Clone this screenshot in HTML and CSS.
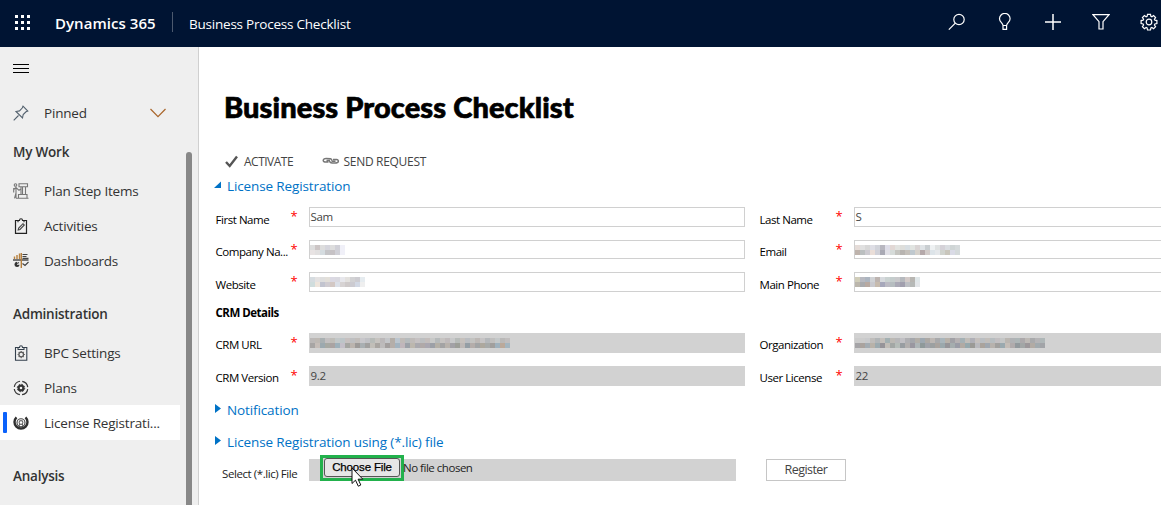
FILE: index.html
```html
<!DOCTYPE html>
<html lang="en">
<head>
<meta charset="utf-8">
<title>Business Process Checklist</title>
<link rel="stylesheet" href="styles.css">
</head>
<body>
<div class="app">
  <header class="topbar">
    <svg class="waffle" width="16" height="16" viewBox="0 0 16 16" fill="#fff"><path d="M0 0h3v3H0zM0 6h3v3H0zM0 12h3v3H0zM6 0h3v3H6zM6 6h3v3H6zM6 12h3v3H6zM12 0h3v3h-3zM12 6h3v3h-3zM12 12h3v3h-3z"/></svg>
    <span class="brand">Dynamics 365</span>
    <span class="divider"></span>
    <span class="appname">Business Process Checklist</span>
    <div class="actions">
      <svg width="18" height="18" viewBox="0 0 18 18"><circle cx="11" cy="6.500" r="5.200"/><path d="M7.300 10.200L.8 16.700"/></svg>
      <svg width="18" height="18" viewBox="0 0 18 18"><path d="M7 12.500c0-2.500-3.500-3.500-3.500-6.800a5.300 5.300 0 0 1 10.600 0c0 3.300-3.500 4.300-3.500 6.800zM7 12.500v3.800h3.600v-3.800"/></svg>
      <svg width="18" height="18" viewBox="0 0 18 18"><path d="M9 1v16M1 9h16" stroke-width="1.500"/></svg>
      <svg width="18" height="18" viewBox="0 0 18 18"><path d="M1 1.700h16L11 8.700v7.300H7V8.700z"/></svg>
      <svg width="18" height="18" viewBox="0 0 18 18"><path d="M7.500 1.300h3l.4 2 1 .4 1.700-1.200 2 2-1.200 1.700.5 1 2 .4v3l-2 .4-.5 1 1.200 1.700-2 2-1.700-1.200-1 .5-.4 2h-3l-.4-2-1-.5-1.700 1.200-2-2 1.200-1.700-.5-1-2-.4v-3l2-.4.5-1-1.200-1.700 2-2 1.700 1.200 1-.4z"/><circle cx="9" cy="9" r="2.800"/></svg>
    </div>
  </header>
  <div class="body">
    <nav class="sidebar">
      <svg class="burger" width="16" height="10" viewBox="0 0 16 10"><path d="M0 .5h16M0 4.500h16M0 8.500h16" stroke="#000"/></svg>
      <div class="item pinned">
        <svg class="ico" width="16" height="16" viewBox="0 0 16 16"><path d="M10 1.200l4.800 4.800-1.800.8-2.800 2.700-.7 3.500-6.500-6.500 3.500-.6L9.200 3zM5.500 10.500L.7 15.300" stroke="#53616e"/></svg>
        <span>Pinned</span>
        <svg class="chev" width="16" height="10" viewBox="0 0 16 10"><path d="M.5 1l7.500 7.700L15.500 1" stroke="#a9662b"/></svg>
      </div>
      <h2 class="group work">My Work</h2>
      <div class="item">
        <svg class="ico" width="16" height="16" viewBox="0 0 16 16"><g stroke="#777"><path d="M6 .7h8.500v3H6zM8 3.700v7.600M12.500 3.700v7.600M5.500 11.500h8.500v3.800H5.500zM3 4.300v11M.7 5v4.500M.7 6.500L3 4.500l3 2.800 1.500-1M3 10L1.500 15.300M3 15.300h12.500M9.500 4v7"/><circle cx="2.500" cy="2" r="1.300"/></g></svg>
        <span>Plan Step Items</span>
      </div>
      <div class="item">
        <svg class="ico" width="16" height="16" viewBox="0 0 16 16"><path d="M5 2.500H2.500v12.800h11V2.500H11" stroke="#222" stroke-width="1.200"/><path d="M5 4.300V2.500h1.500C6.500.2 9.500.2 9.500 2.500H11v1.800" stroke="#222"/><path d="M5.200 12l.5-2 4.300-4.300 1.300 1.300L7 11.400z" stroke="#444"/></svg>
        <span>Activities</span>
      </div>
      <div class="item">
        <svg class="ico" width="16" height="16" viewBox="0 0 16 16"><path d="M0 7h15.500" stroke="#333" stroke-width="1.300"/><path d="M1.500 6V3.500M4 6V2M6.500 6V.5M8.300 0v15" stroke="#b7803d" stroke-width="1.400"/><path d="M9.500 1.500h5M9.500 3.500h4M9.500 5.300h6M9.500 10.500l2.500 2 3.500-3.500M6 9.500l-2 1" stroke="#444" stroke-width="1.200"/><path d="M4 8.700a2.600 2.600 0 1 0 2.600 3H4z" fill="#333" stroke="none"/></svg>
        <span>Dashboards</span>
      </div>
      <h2 class="group admin">Administration</h2>
      <div class="item">
        <svg class="ico" width="16" height="16" viewBox="0 0 16 16"><path d="M5 2.500H2.500v12.800h11.300V2.500H11M4.500 4.500h7M5 4.300V2.500h1.500C6.500.2 9.500.2 9.500 2.500H11v1.800" stroke="#34404d"/><circle cx="8.200" cy="9.500" r="2.300" stroke="#555" stroke-width="1.200"/><path d="M8.200 5.900v1.200M8.200 12v1.200M4.600 9.500h1.200M10.700 9.500h1.200M5.700 7l.8.8M10.700 7l-.8.8M5.700 12l.8-.8M10.700 12l-.8-.8" stroke="#666"/></svg>
        <span>BPC Settings</span>
      </div>
      <div class="item">
        <svg class="ico" width="16" height="16" viewBox="0 0 16 16"><circle cx="8" cy="8" r="6.800" stroke="#333" stroke-width="1.200" stroke-dasharray="8.400 2.280" stroke-dashoffset="-1.100"/><circle cx="8" cy="8" r="2.400" stroke="#333" stroke-width="2.200"/><circle cx="8" cy="8" r="3.700" stroke="#333" stroke-width="1" stroke-dasharray="1.500 1.400"/></svg>
        <span>Plans</span>
      </div>
      <div class="item current">
        <svg class="ico" width="16" height="16" viewBox="0 0 16 16"><path d="M3.500 2.300a6.500 6.500 0 1 0 9 0" stroke="#303030" stroke-width="2.400"/><circle cx="8" cy="7.800" r="4" stroke="#444" stroke-width="1.100"/><circle cx="8" cy="7.500" r="1.900" stroke="#666"/><path d="M5.500 11.500l1.500-2.500M10.500 11.500L9 9" stroke="#555"/></svg>
        <span>License Registrati...</span>
      </div>
      <h2 class="group analysis">Analysis</h2>
      <div class="scrollthumb"></div>
    </nav>
    <main class="main">
      <h1 class="title">Business Process Checklist</h1>
      <div class="toolbar">
        <svg width="14" height="13" viewBox="0 0 14 13"><path d="M1 7l3.700 4L12 1.500" fill="none" stroke="#555" stroke-width="2.400"/></svg>
        <span class="t-activate">ACTIVATE</span>
        <svg class="link" width="18" height="8" viewBox="0 0 18 8"><path d="M10 3.500C9.500 1.500 8.500 1.500 4 1.500 1 1.500 0 4.500 3 5h3.500M7.500 4C8 6 9 6 13 6c4 0 4.500-3 1.500-3.500H11M4.500 3.500h3.500M9.500 4.200h4" fill="none" stroke="#777" stroke-width="1.400"/></svg>
        <span class="t-send">SEND REQUEST</span>
      </div>
      <div class="section open">
        <svg width="8" height="8" viewBox="0 0 8 8"><path d="M7 .5V7H0z" fill="#0072c6"/></svg>
        <span class="s-license">License Registration</span>
      </div>
      <div class="row r1">
        <label>First Name</label><i>*</i><div class="field">Sam</div>
        <label>Last Name</label><i>*</i><div class="field">S</div>
      </div>
      <div class="row r2">
        <label>Company Na...</label><i>*</i><div class="field"><span class="mosaic" data-m="company"></span></div>
        <label>Email</label><i>*</i><div class="field"><span class="mosaic" data-m="email"></span></div>
      </div>
      <div class="row r3">
        <label>Website</label><i>*</i><div class="field"><span class="mosaic" data-m="website"></span></div>
        <label>Main Phone</label><i>*</i><div class="field"><span class="mosaic" data-m="phone"></span></div>
      </div>
      <h3 class="crm">CRM Details</h3>
      <div class="row r4">
        <label>CRM URL</label><i>*</i><div class="field locked"><span class="mosaic" data-m="url"></span></div>
        <label>Organization</label><i>*</i><div class="field locked"><span class="mosaic" data-m="org"></span></div>
      </div>
      <div class="row r5">
        <label>CRM Version</label><i>*</i><div class="field locked">9.2</div>
        <label>User License</label><i>*</i><div class="field locked">22</div>
      </div>
      <div class="section notif">
        <svg width="7" height="10" viewBox="0 0 7 10"><path d="M0 0l6 4.500L0 9z" fill="#0072c6"/></svg>
        <span>Notification</span>
      </div>
      <div class="section lic">
        <svg width="7" height="10" viewBox="0 0 7 10"><path d="M0 0l6 4.500L0 9z" fill="#0072c6"/></svg>
        <span>License Registration using (*.lic) file</span>
      </div>
      <div class="filerow">
        <span class="filelabel">Select (*.lic) File</span>
        <div class="filebar">
          <div class="highlight"><button class="choose">Choose File</button></div>
          <span class="nofile">No file chosen</span>
          <svg class="cursor" width="13" height="21" viewBox="0 0 13 21"><path d="M1 1v15.500l3.500-3.300 2.800 6 2.500-1.200-2.700-5.800h4.700z" fill="#fff" stroke="#111"/></svg>
        </div>
        <button class="register">Register</button>
      </div>
    </main>
  </div>
</div>
<script src="mosaic.js"></script>
</body>
</html>
```
FILE: styles.css
```css
* { box-sizing: border-box; }
body { margin: 0; font-family: "Open Sans", "Noto Sans", sans-serif; background: #fff; color: #333; }
h1, h2, h3 { margin: 0; }
svg { display: block; flex: none; }
button { font-family: inherit; padding: 0; }
.app { display: flex; flex-direction: column; width: 1161px; height: 505px; overflow: hidden; white-space: nowrap; }

.topbar { display: flex; align-items: center; height: 47px; flex: none; background: #001433; color: #fff; padding-left: 15px; }
.waffle { margin-top: -1px; }
.brand { width: 117px; margin-left: 24px; margin-top: -1px; font-size: 15px; font-weight: 600; letter-spacing: .05px; }
.divider { width: 1px; height: 20px; margin-top: -3px; background: #4c596e; }
.appname { margin-left: 16px; font-size: 13.500px; letter-spacing: -.22px; }
.actions { display: flex; gap: 30px; margin-left: auto; margin-right: 3px; margin-top: -3px; }
.actions svg { fill: none; stroke: #fff; stroke-width: 1.200; }

.body { display: flex; flex: 1; min-height: 0; }
.sidebar { position: relative; width: 199px; flex: none; background: #efefef; border-right: 1px solid #d0d0d0; overflow: hidden; }
.burger { margin: 17px 0 0 13px; }
.item { display: flex; align-items: center; width: 180px; height: 35px; padding-left: 13px; font-size: 13.500px; letter-spacing: -.2px; }
.item span { margin-left: 15px; }
.ico { fill: none; stroke-width: 1.100; }
.pinned { margin-top: 21px; }
.pinned span { width: 44px; }
.chev { fill: none; margin-left: 62px; stroke-width: 1.200; }
.group { height: 20px; line-height: 20px; padding-left: 13px; font-size: 13.500px; font-weight: 600; letter-spacing: -.22px; }
.work { margin: 12px 0 11px; }
.admin { margin: 26px 0 11px; }
.analysis { margin-top: 26px; }
.current { position: relative; background: #fff; }
.current::before { content: ""; position: absolute; left: 3px; top: 7px; width: 4px; height: 21px; border-radius: 1px; background: #0b62fb; }
.scrollthumb { position: absolute; left: 186px; top: 105px; width: 6px; height: 370px; border-radius: 3px; background: #888; }

.main { flex: 1; min-width: 0; padding-left: 17px; }
.title { height: 36px; margin: 42px 0 0 8px; line-height: 36px; font-family: Lato, sans-serif; font-weight: 900; font-size: 29px; color: #000; letter-spacing: .1px; -webkit-text-stroke: .7px #000; }
.toolbar { display: flex; align-items: center; height: 20px; margin: 26px 0 0 8.500px; font-size: 12px; color: #444; }
.t-activate { width: 78px; margin-left: 5.500px; letter-spacing: -.5px; }
.t-send { margin-left: 3.500px; letter-spacing: -.3px; }
.section { display: flex; align-items: center; height: 20px; font-size: 13.500px; color: #0072c6; letter-spacing: -.12px; }
.section svg { margin-top: -3px; }
.open { margin-top: 5px; margin-left: -2px; }
.open span { margin-left: 5px; }
.notif, .lic { margin-left: -1px; }
.notif span, .lic span { margin-left: 5px; }
.row { display: grid; grid-template-columns: 75px 18px 436px 15px 76px 18px 307px; height: 20px; color: #000; font-size: 11.500px; letter-spacing: -.45px; }
.row label { height: 20px; line-height: 20px; padding-top: 2px; margin-left: -.5px; }
.row label:nth-of-type(2) { grid-column: 5; }
.row i { font-style: normal; color: #f00; font-size: 13px; line-height: 20px; margin: -1px 0 0 -.5px; }
.field { height: 20px; border: 1px solid #d0d0d0; line-height: 18px; color: #444; letter-spacing: -.3px; padding-left: .5px; }
.row .field:last-child { border-right: 0; }
.locked { border-color: #d2d2d2; background: #d2d2d2; }
.r1 { margin-top: 11px; }
.r1 label { padding-top: 3px; }
.r2 { margin-top: 13px; }
.r2 .field { height: 19px; }
.r3 { margin-top: 12px; }
.r3 label { padding-top: 3px; }
.crm { height: 20px; line-height: 20px; margin: 11px 0 10px -.5px; font-size: 11.500px; color: #000; font-weight: 700; letter-spacing: -.5px; }
.r5 { margin-top: 13px; }
.notif { margin-top: 14px; }
.lic { margin-top: 12px; }
.mosaic { display: block; width: max-content; margin-top: 4px; margin-left: -.5px; }
.mosaic div { display: flex; }
.mosaic b { display: block; width: 5px; height: 5px; }
.filerow { display: flex; height: 22px; margin-top: 7px; }
.filelabel { width: 87px; padding: 5px 0 0 6px; margin-right: 6px; line-height: 20px; font-size: 11.500px; letter-spacing: -.42px; color: #222; }
.filebar { position: relative; display: flex; width: 427px; height: 22px; background: #d2d2d2; }
.highlight { width: 84px; height: 26px; margin: -4px 0 0 11px; border: 3px solid #22b14c; flex: none; background: #d2d2d2; }
.choose { display: block; width: 76px; height: 19px; margin: 0 0 0 1px; border: 1px solid #555; border-radius: 3px; background: #e6e6e6; color: #000; font: 11.500px/17px "Liberation Sans", Arial, sans-serif; letter-spacing: -.15px; -webkit-text-stroke: .25px #000; }
.nofile { line-height: 18px; font-size: 11.500px; margin-left: -1px; letter-spacing: -.48px; color: #222; }
.cursor { position: absolute; left: 42px; top: 8px; }
.register { width: 80px; height: 22px; margin-left: 30px; border: 1px solid #c6c6c6; background: #fff; font-size: 12.500px; line-height: 20px; color: #444; letter-spacing: -.55px; }
```
FILE: mosaic.js
```js
// Privacy mosaic: each string is a row of 5px cells, one space-separated hex colour per cell.
const masks = {
  company: ["ddd ccc5c5 ddd d5d5dc ddd d0d0d7 f0f0f8", "e8e3e3 e2e0e0 d5dce0 c5c5c8 c6c2c5 d0d0d7 f0f0f8"],
  email: ["e5dcd8 e0e0e0 d7d7d7 dedee5 d1d3da b8b7c0 dedde8 e2d8d5 e2e3e0 dededb d8dee2 e1e4e1 d9d4d4 dfe3e6 c9ced1 eef1f2 dfe2e2 d5d2d8 dadde1 cfd5d5 d5dadb",
    "beb3ac bbbfc0 cdcbd1 eaded8 d1d1d8 aaaab5 e1e0e7 d6dbd9 c5c5c0 b8b4b0 c5c0ba c0c9cf d6d2cc b5a9aa d2cbc9 dde4e9 e5e8eb d0d3ce c9c6bc dadbe6 d5dadb"],
  website: ["d6dce0 e4e2e2 dedede e2dfd9 dbd9e3 dad9e0 e7e7ec e3e1de d2d2d4 cdccd1 e6ecf0",
    "d0dddd eee5dc c2c4cf d0ccd1 d3c8c4 dce0e8 d7d3d3 cfcaca cccbd1 d2d8e4 efefef"],
  phone: ["d0cdb9 b8b9c0 acb5c0 d0d2d5 bdb4b0 d7dade cad2d1 c5cdcd c9c9cb b6b9be d3cac8 b8b6b2 e0e7e9",
    "bbb6ac a9aaad b8a9a1 c9c9ce c7bbae a7a8bb bcbbc4 b6bdc0 aaa9b6 a19fae bdbfc4 b6b9b7 e3e6e9"],
  url: ["bbb8b7 bdb8b3 a9b0b2 c2bfc0 bfbdb8 c2c7c8 bdc5c8 c6c0bf bebfc1 c1bdba c8c7cb c0c1c5 b7bbb8 c6c3bf bbb8b9 c4c6c9 b4aea8 bbc5ce bfbab7 b5babc bfbbb9 c5c1c2 bcbec0 c3bdbb c8c9c8 b6babb c6c3c1 bfbabb c8c9ca b7bbb9 c5c0bc babdc1 c3c3c1 bdb8b5 c6c4c5 b5b8bb c0bfbe c4c8c9 bab9b8 c1bebe",
    "a7a5a4 c5bdb8 9ca9af a7a9a3 aaa3a2 9eb0ba c3bfc8 a5a6a2 bbb4ae 9d9a98 a9afb2 a1a09f c1beb8 a9a5a1 bdbbbb a39f9e b5aea9 a3b3bf c0b6bb 9ca1a8 bcb7ae aaa9ae b0a9a8 aaa7b0 9ca0a7 b4b0a7 a3a3a4 b8b2ac a2a1a6 9c9e98 bdb8b6 949ea5 b4adaa a2a4a5 ada89e a7aaa9 a19f9d 9fb1bd bba99a a4b5bf"],
  org: ["cccccc cccccc c9cacc bfbdbb b1b5b7 c4bfba a3b0b2 bcb9b4 b7b7b9 c1c0c4 afafb2 a5a7ac b2aea8 9ea8b1 aca8a4 bdb7b3 a8a9ab a9b5bb b7b1a9 a1a1a6 b5b1b2 a5b1b5 c1bdb8 b0b0b7 c5c0bd babec2 c2beba b7bdc0 c2bfc1 c4c6c6 bab6b1 b0b2b5 adb5b6 aca9ab bdb9b5 a9aaac b5b4b6 afb7b8",
    "a5a4a7 aaa39e a4acb2 b8b2a9 9caaaf 969499 c1bdb7 a3a7a5 b5bcb8 989da1 b2afae 9a97a0 aeb5b7 8f999a a0a2a9 9ca0a1 a9a39e 9ba8ac 969599 a5adae 9a9ca6 b1aaa3 96a8ac 9b9a96 b9b9bd aaa39c a0a7af b7b2ad a1a09e 9aa9af c4bdb7 b0abac 92999d a2a6a6 9c979a b2aba4 a2aaae a2a4a8"]
};
for (const node of document.querySelectorAll(".mosaic")) {
  for (const line of masks[node.dataset.m]) {
    const row = document.createElement("div");
    for (const colour of line.split(" ")) {
      const cell = document.createElement("b");
      cell.style.backgroundColor = "#" + colour;
      row.append(cell);
    }
    node.append(row);
  }
}
```
